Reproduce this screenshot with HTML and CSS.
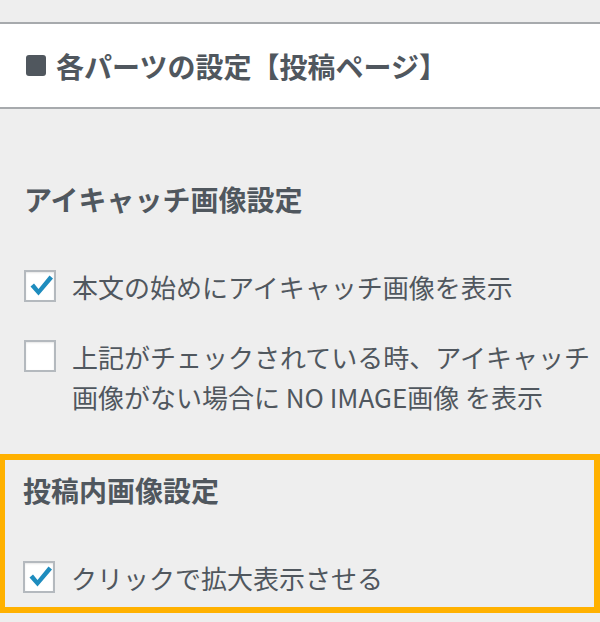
FILE: index.html
```html
<!DOCTYPE html>
<html lang="ja">
<head>
    <meta charset="UTF-8">
    <meta name="viewport" content="width=device-width, initial-scale=1.0">
    <title>各パーツの設定【投稿ページ】</title>
    <link rel="stylesheet" href="styles.css">
</head>
<body>

<div class="panel-header">
    <span class="panel-mark"></span>
    <h2>各パーツの設定【投稿ページ】</h2>
</div>

<div class="setting-group">
    <h3>アイキャッチ画像設定</h3>
    <label class="check-row">
        <input type="checkbox" checked>
        <span class="check-box">
            <svg viewBox="0 0 28 28" width="28" height="28"><path d="M4.5 14.5 L8 11.5 L12.5 17 L23.5 3.5 L27 6.5 L12.5 23.5 Z" fill="#1e8cbe"/></svg>
        </span>
        <span class="check-text">本文の始めにアイキャッチ画像を表示</span>
    </label>
    <label class="check-row">
        <input type="checkbox">
        <span class="check-box"></span>
        <span class="check-text">上記がチェックされている時、アイキャッチ画像がない場合に NO IMAGE画像 を表示</span>
    </label>
</div>

<div class="setting-group highlighted">
    <h3>投稿内画像設定</h3>
    <label class="check-row">
        <input type="checkbox" checked>
        <span class="check-box">
            <svg viewBox="0 0 28 28" width="28" height="28"><path d="M4.5 14.5 L8 11.5 L12.5 17 L23.5 3.5 L27 6.5 L12.5 23.5 Z" fill="#1e8cbe"/></svg>
        </span>
        <span class="check-text">クリックで拡大表示させる</span>
    </label>
</div>

</body>
</html>
```

FILE: styles.css
```css
body {
    margin: 0;
    background: #eeeeee;
    color: #50575e;
    font-family: "Noto Sans CJK JP", "Noto Sans", sans-serif;
    overflow: hidden;
}

.panel-header {
    margin-top: 22px;
    height: 83px;
    background: #ffffff;
    border-top: 2px solid #a7aaad;
    border-bottom: 2px solid #a7aaad;
    display: flex;
    align-items: center;
    padding-left: 26px;
}

.panel-mark {
    width: 20px;
    height: 21px;
    border-radius: 3px;
    background: #50575e;
    margin-right: 10px;
}

.panel-header h2 {
    margin: 0;
    font-size: 28px;
    line-height: 40px;
    font-weight: 700;
}

.setting-group {
    padding: 70px 0 0 24px;
}

.setting-group h3 {
    margin: 0 0 48px;
    font-size: 28px;
    line-height: 40px;
    font-weight: 700;
}

.check-row {
    display: flex;
    align-items: flex-start;
    margin-bottom: 30px;
    font-size: 26px;
    line-height: 40px;
    cursor: pointer;
}

.check-row:last-child {
    margin-bottom: 0;
}

.check-row input {
    display: none;
}

.check-box {
    flex: none;
    width: 28px;
    height: 28px;
    margin-top: 3px;
    margin-right: 16px;
    background: #ffffff;
    border: 2px solid #b4b9be;
    box-shadow: inset 0 1px 2px rgba(0, 0, 0, 0.1);
    display: flex;
    align-items: center;
    justify-content: center;
}

.check-text {
    width: 528px;
}

.highlighted {
    margin-top: 37px;
    padding: 10px 0 9px 18px;
    border: 6px solid #ffb100;
    border-left-width: 5px;
}
```
